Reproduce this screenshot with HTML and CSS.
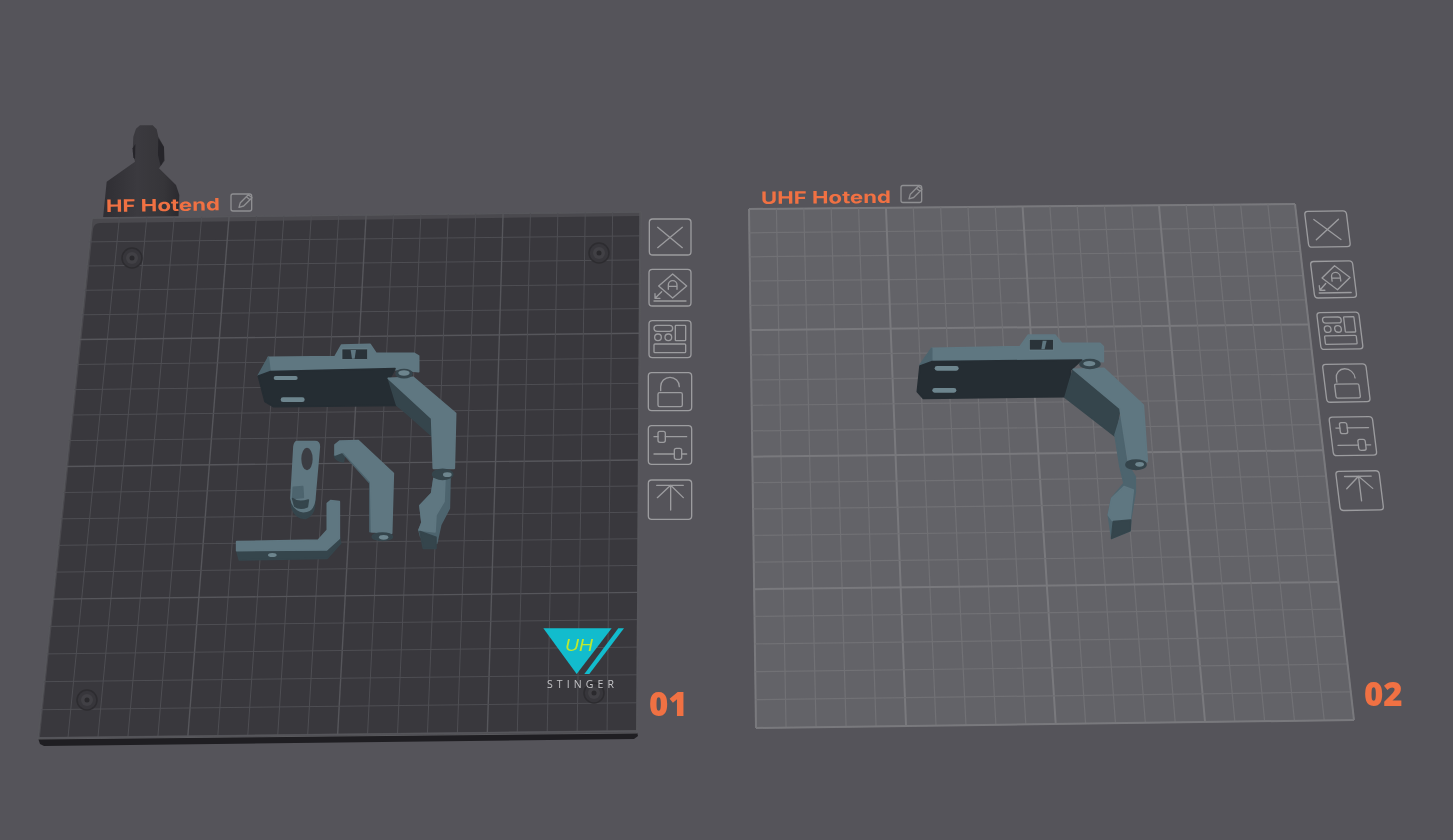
FILE: index.html
```html
<!DOCTYPE html>
<html lang="en">
<head>
<meta charset="utf-8">
<title>Plates</title>
<link rel="stylesheet" href="styles.css">
</head>
<body>
<main class="scene">
<svg class="canvas" width="1453" height="840" viewBox="0 0 1453 840" xmlns="http://www.w3.org/2000/svg">
  <defs>
    <linearGradient id="extruderShade" x1="0" x2="1" y1="0" y2="0">
      <stop offset="0" stop-color="#2f2e33"/>
      <stop offset="0.45" stop-color="#3b3a3f"/>
      <stop offset="0.8" stop-color="#363539"/>
      <stop offset="1" stop-color="#2b2a2f"/>
    </linearGradient>
    <g id="tools" class="tool">
      <rect x="28" y="57" width="125" height="108" rx="10"/>
      <path d="M53 82 127 143M127 82 53 143"/>
      <rect x="27" y="208" width="126" height="110" rx="10"/>
      <path d="M98 222 140 258 98 294 56 258ZM65 275 45 295M45 281V295H60M42 303H138"/>
      <path d="M85 268V255A13 13 0 0 1 111 255V268M85 259H111"/>
      <rect x="27" y="362" width="126" height="111" rx="10"/>
      <rect x="42" y="376" width="56" height="18" rx="9"/>
      <circle cx="54" cy="412" r="10"/>
      <circle cx="85" cy="412" r="10"/>
      <rect x="106" y="376" width="31" height="46" rx="2"/>
      <rect x="42" y="432" width="95" height="26" rx="3"/>
      <rect x="25" y="518" width="130" height="114" rx="10"/>
      <rect x="54" y="578" width="73" height="42" rx="5"/>
      <path d="M62 572V560A28 28 0 0 1 118 560"/>
      <rect x="25" y="677" width="130" height="116" rx="10"/>
      <path d="M42 710H54M76 710H140M42 762H103M125 762H140"/>
      <rect x="54" y="694" width="22" height="33" rx="6"/>
      <rect x="103" y="745" width="22" height="33" rx="6"/>
      <rect x="25" y="840" width="130" height="118" rx="10"/>
      <path d="M50 856H130M92 856V930M52 893 92 856 130 893"/>
    </g>
    <g id="edit" class="edit">
      <rect x="0" y="0" width="62" height="51" rx="6"/>
      <path d="M24 40 28 26 52 2 63 11 38 36ZM46 8 57 17"/>
    </g>
    <g id="screw">
      <circle class="screw-a" r="10"/>
      <circle class="screw-b" r="6"/>
      <circle class="screw-c" r="2.5"/>
    </g>
  </defs>

  <!-- extruder behind plate 1 -->
  <g transform="translate(90 120) scale(.3333)">
    <path fill="url(#extruderShade)" d="M138 26 150 16 188 16 200 28 205 50 222 80 224 122 207 145 258 195 268 225 265 305 38 305 50 185 135 125 128 95 130 50Z"/>
    <path class="ext-dark" d="M205 55 222 82 222 120 212 138 204 105Z"/>
    <path class="ext-dark" d="M128 85 136 72 135 118 130 112Z"/>
  </g>

  <!-- plate 1 -->
  <polygon class="plate1-edge" points="38,738 637,732 638,736 634,739 44,746 40,744"/>
  <polygon class="plate1-rim" points="92,218 641,212 637,733 38,739"/>
  <path class="plate1-fill" d="M100 223 640 216 636 730 40 737 93 229Q94 223 100 223Z"/>
  <g id="grid1" class="grid-dark"></g>
  <use href="#screw" x="132" y="258"/>
  <use href="#screw" x="599" y="253"/>
  <use href="#screw" x="87" y="700"/>
  <use href="#screw" x="594" y="693"/>

  <!-- plate 2 -->
  <polygon class="plate2-fill" points="749,209 1295,204 1354,720 756,728"/>
  <g id="grid2" class="grid-light"></g>

  <!-- parts on plate 1 -->
  <g transform="translate(220 330) scale(.3333)">
    <polygon class="m-top" points="145,82 345,80 365,45 450,43 468,70 582,70 596,78 596,125 530,118 150,125"/>
    <polygon class="m-mid" points="145,82 150,125 115,136"/>
    <polygon class="m-face" points="115,138 150,125 525,116 508,148 535,226 160,230 135,215"/>
    <rect class="m-slot" x="161" y="138" width="72" height="12" rx="6"/>
    <rect class="m-slot" x="182" y="202" width="72" height="14" rx="7"/>
    <rect class="m-win" x="366" y="57" width="77" height="31"/>
    <polygon class="m-bar" points="392,60 408,60 404,86 396,86"/>
    <polygon class="m-side" points="505,145 635,265 636,318 560,250 530,225"/>
    <polygon class="m-top" points="505,145 580,142 707,250 703,415 640,415 635,265"/>
    <ellipse class="m-side" cx="552" cy="131" rx="24" ry="12"/>
    <ellipse class="m-slot" cx="552" cy="129" rx="17" ry="8"/>
    <polygon class="m-mid" points="642,445 690,445 688,535 662,585 650,640 602,620 597,600 606,578 600,527 635,490"/>
    <polygon class="m-top" points="642,445 675,445 672,515 648,555 645,606 597,600 606,578 600,527 635,490"/>
    <polygon class="m-side" points="600,605 648,622 648,655 610,655"/>
    <ellipse class="m-side" cx="668" cy="433" rx="30" ry="15"/>
    <ellipse class="m-slot" cx="682" cy="434" rx="13" ry="7"/>
    <path class="m-side" d="M343 375Q345 392 370 396L375 370 350 360Z"/>
    <polygon class="m-mid" points="365,365 450,460 450,605 460,605 460,450 375,360"/>
    <polygon class="m-top" points="345,345 360,333 415,332 520,430 515,610 455,605 452,455 370,365 345,375"/>
    <ellipse class="m-side" cx="487" cy="620" rx="30" ry="11"/>
    <ellipse class="m-slot" cx="491" cy="622" rx="14" ry="7"/>
    <path class="m-side" d="M215 500 V530 Q225 565 258 565 Q280 555 283 530 L285 500Z"/>
    <path class="m-top" d="M232 335H285Q298 335 298 350L284 510Q280 545 250 545 218 540 213 505L222 350Q224 335 232 335Z"/>
    <ellipse class="m-hole" cx="261" cy="387" rx="17" ry="34"/>
    <polygon class="m-mid" points="220,472 248,470 250,502 218,505"/>
    <path class="m-side" d="M218 506Q235 520 265 510L262 530Q240 540 224 528Z"/>
    <polygon class="m-side" points="50,660 320,658 358,620 362,640 322,685 58,690"/>
    <polygon class="m-top" points="50,635 295,630 322,600 322,520 332,512 358,515 358,625 320,660 50,662"/>
    <ellipse class="m-slot" cx="157" cy="675" rx="13" ry="6"/>
  </g>

  <!-- parts on plate 2 -->
  <g transform="translate(900 320) scale(.3333)">
    <polygon class="m-top" points="95,85 360,80 385,45 465,45 485,70 600,70 610,80 610,125 525,118 95,125"/>
    <polygon class="m-mid" points="95,85 95,125 60,135"/>
    <polygon class="m-face" points="60,138 95,125 545,120 512,150 505,230 70,235 52,215"/>
    <rect class="m-slot" x="104" y="138" width="72" height="14" rx="7"/>
    <rect class="m-slot" x="97" y="204" width="72" height="14" rx="7"/>
    <rect class="m-win" x="388" y="58" width="72" height="32"/>
    <polygon class="m-bar" points="428,62 440,62 434,88 424,88"/>
    <polygon class="m-side" points="520,148 660,265 645,348 495,232 510,180"/>
    <polygon class="m-mid" points="645,345 662,290 680,425 690,445 706,470 706,515 692,600 690,632 635,655 625,585 635,535 672,490 660,440"/>
    <polygon class="m-top" points="520,148 612,145 730,255 742,425 685,425 660,265"/>
    <polygon class="m-top" points="635,535 672,500 700,510 690,600 640,605 625,585"/>
    <polygon class="m-side" points="640,605 692,600 690,632 635,655"/>
    <ellipse class="m-side" cx="570" cy="132" rx="30" ry="13"/>
    <ellipse class="m-slot" cx="568" cy="131" rx="18" ry="8"/>
    <ellipse class="m-side" cx="708" cy="434" rx="30" ry="14"/>
    <ellipse class="m-slot" cx="719" cy="433" rx="13" ry="7"/>
  </g>

  <!-- logo -->
  <g transform="translate(530 610) scale(.3333)">
    <polygon class="logo" points="40,55 245,55 140,192"/>
    <polygon class="logo" points="265,55 282,55 178,192 163,192"/>
  </g>
  <text class="logo-mark" x="565" y="651" textLength="28" lengthAdjust="spacingAndGlyphs">UH</text>
  <text class="logo-word" x="547" y="688" textLength="67">STINGER</text>

  <!-- labels -->
  <text class="label" x="106" y="212" textLength="114" lengthAdjust="spacingAndGlyphs" transform="rotate(-.8 106 212)">HF Hotend</text>
  <use href="#edit" transform="translate(231 194) scale(.3333)"/>
  <text class="label" x="761" y="204" textLength="130" lengthAdjust="spacingAndGlyphs" transform="rotate(-.5 761 204)">UHF Hotend</text>
  <use href="#edit" transform="translate(901 185.500) scale(.3333)"/>
  <text class="num" x="649" y="716">01</text>
  <text class="num" x="1364" y="706">02</text>

  <use href="#tools" transform="translate(640 200) scale(.3333)"/>
  <use href="#tools" transform="translate(1295 200) scale(.3333) matrix(1 -.016 .123 .996 -6.65 -22.1)"/>
</svg>
</main>
<script src="grid.js"></script>
</body>
</html>
```

FILE: styles.css
```css
html, body {
  margin: 0;
  padding: 0;
  background: #55545a;
  overflow: hidden;
}
.scene {
  width: 1453px;
  height: 840px;
}
.canvas {
  display: block;
  filter: blur(0.45px);
}
.plate1-edge { fill: #1f1e22; }
.plate1-rim { fill: #4a494e; stroke: #5a5a5e; stroke-width: 1; }
.plate1-fill { fill: #39383d; }
.plate2-fill { fill: #636368; stroke: #77777b; stroke-width: 1; }
.grid-dark line { stroke: #4e4e53; stroke-width: 1; }
.grid-dark line.major { stroke: #56565b; stroke-width: 1.4; }
.grid-light line { stroke: #717175; stroke-width: 1.2; }
.grid-light line.major { stroke: #79797d; stroke-width: 2; }
.screw-a { fill: #37363b; stroke: #2d2c30; stroke-width: 1.5; }
.screw-b { fill: #414045; }
.screw-c { fill: #2a292d; }
.ext-dark { fill: #26252a; }
.m-top, .m-mid, .m-side, .m-face {
  stroke-width: 5;
  stroke-linejoin: round;
}
.m-top { fill: #5f7781; stroke: #5f7781; }
.m-mid { fill: #4d646e; stroke: #4d646e; }
.m-side { fill: #35454c; stroke: #35454c; }
.m-face { fill: #252d33; stroke: #252d33; }
.m-bar { fill: #5f7781; }
.m-slot { fill: #6d858e; }
.m-win { fill: #2a3339; stroke: #6d858e; stroke-width: 2; }
.m-hole { fill: #3b3d43; }
.logo { fill: #12bccd; }
.logo-mark {
  font-family: "Liberation Sans", sans-serif;
  font-style: italic;
  font-size: 17px;
  fill: #bde92e;
}
.logo-word {
  font-family: "Open Sans", sans-serif;
  font-size: 10.5px;
  fill: #c4c4c7;
}
.label {
  font-family: "Inter", sans-serif;
  font-weight: 700;
  font-size: 17px;
  fill: #f07143;
}
.num {
  font-family: "Open Sans", sans-serif;
  font-weight: 800;
  font-size: 33px;
  fill: #f07143;
}
.tool rect, .tool circle, .tool path {
  fill: none;
  stroke: #9c9c9f;
  stroke-width: 4;
  stroke-linecap: round;
  stroke-linejoin: round;
}
.edit rect, .edit path {
  fill: none;
  stroke: #8f8f92;
  stroke-width: 4;
  stroke-linejoin: round;
}
```

FILE: grid.js
```js
(function () {
  var NS = "http://www.w3.org/2000/svg";

  function homography(q) {
    var x0 = q[0][0], y0 = q[0][1], x1 = q[1][0], y1 = q[1][1];
    var x2 = q[2][0], y2 = q[2][1], x3 = q[3][0], y3 = q[3][1];
    var sx = x0 - x1 + x2 - x3, sy = y0 - y1 + y2 - y3;
    var dx1 = x1 - x2, dx2 = x3 - x2, dy1 = y1 - y2, dy2 = y3 - y2;
    var den = dx1 * dy2 - dx2 * dy1;
    var g = (sx * dy2 - dx2 * sy) / den;
    var h = (dx1 * sy - sx * dy1) / den;
    return function (u, v) {
      var w = g * u + h * v + 1;
      return [
        ((x1 - x0 + g * x1) * u + (x3 - x0 + h * x3) * v + x0) / w,
        ((y1 - y0 + g * y1) * u + (y3 - y0 + h * y3) * v + y0) / w
      ];
    };
  }

  function draw(id, quad) {
    var group = document.getElementById(id);
    var map = homography(quad);
    function add(a, b, major) {
      var l = document.createElementNS(NS, "line");
      l.setAttribute("x1", a[0]);
      l.setAttribute("y1", a[1]);
      l.setAttribute("x2", b[0]);
      l.setAttribute("y2", b[1]);
      if (major) l.setAttribute("class", "major");
      group.appendChild(l);
    }
    for (var i = 0; i <= 20; i++) {
      var t = i / 20, major = i % 5 === 0;
      add(map(t, 0), map(t, 1), major);
      add(map(0, t), map(1, t), major);
    }
  }

  draw("grid1", [[92, 218], [640, 212], [637, 731], [38, 738]]);
  draw("grid2", [[749, 209], [1295, 204], [1354, 720], [756, 728]]);
})();
```
